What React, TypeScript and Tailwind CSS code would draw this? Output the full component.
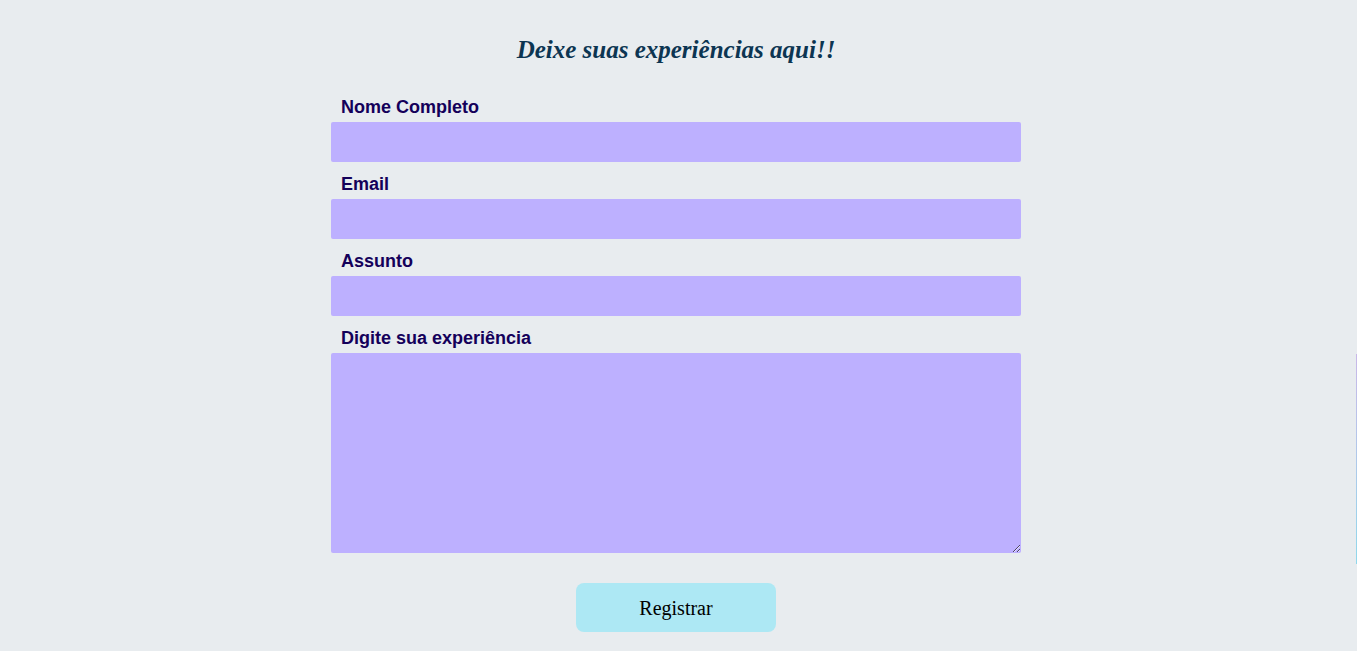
import React from "react";

export default function App() {
  const labelCls =
    "block pl-[10px] text-[18px] leading-[22px] font-bold text-[#14005a] font-['Liberation_Sans',Arial,sans-serif]";
  const inputCls = "block w-full h-[40px] bg-[#bdb0ff] rounded-[2px] outline-none border-0";
  return (
    <div className="relative min-h-[651px] w-full bg-[#e8ecef] overflow-hidden">
      <div className="w-[1352px] flex flex-col items-center pt-[34px]">
        <h1 className="text-[25px] leading-[32px] font-bold italic text-[#0c3552] font-['Liberation_Serif','Times_New_Roman',serif]">
          Deixe suas experiências aqui!!
        </h1>
        <form className="w-[690px] mt-[30px] flex flex-col">
          <label className={labelCls}>Nome Completo</label>
          <input className={inputCls + " mt-[4px]"} />
          <label className={labelCls + " mt-[11px]"}>Email</label>
          <input className={inputCls + " mt-[4px]"} />
          <label className={labelCls + " mt-[11px]"}>Assunto</label>
          <input className={inputCls + " mt-[4px]"} />
          <label className={labelCls + " mt-[11px]"}>Digite sua experiência</label>
          <textarea className="block w-full h-[200px] mt-[4px] bg-[#bdb0ff] rounded-[2px] outline-none border-0 resize-y" />
          <div className="flex justify-center mt-[30px]">
            <button
              type="button"
              className="w-[200px] h-[49px] rounded-[8px] bg-[#ade8f4] text-[20px] text-black font-['Liberation_Serif','Times_New_Roman',serif]"
            >
              Registrar
            </button>
          </div>
        </form>
      </div>
      <div className="absolute right-0 top-[354px] w-[1px] h-[210px] bg-gradient-to-b from-[#c8b8e8] to-[#8fd8ec]" />
    </div>
  );
}
